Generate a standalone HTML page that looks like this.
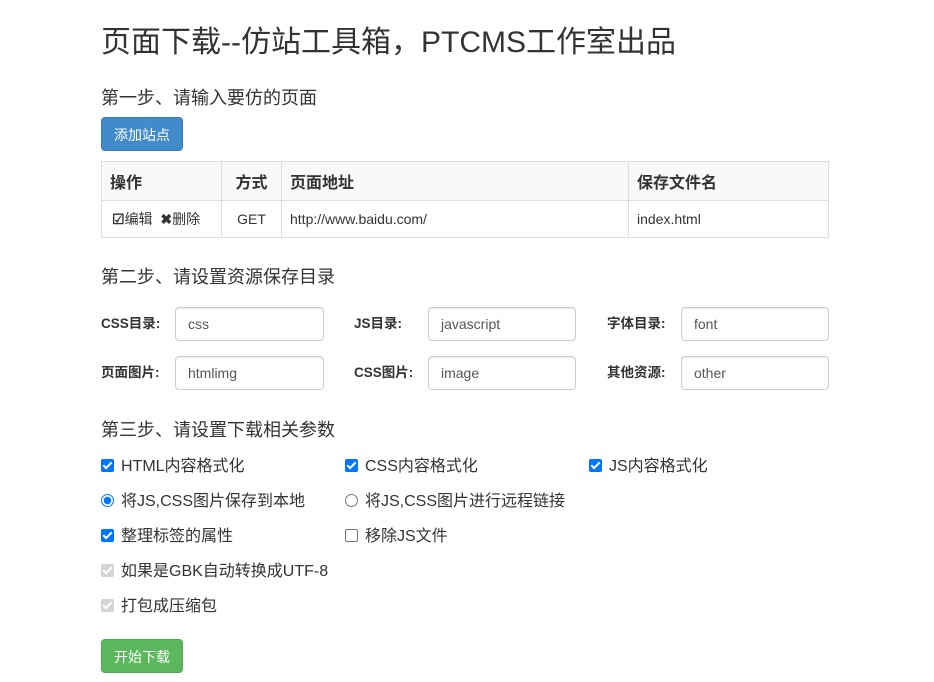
<!DOCTYPE html>
<html><head><meta charset="utf-8"><style>
body{margin:0;background:#fff;font-family:"Liberation Sans","Noto Sans CJK SC",sans-serif;color:#333;font-size:14px;width:934px;height:682px;position:relative;overflow:hidden}
.a{position:absolute;white-space:nowrap}
h1{position:absolute;left:101px;top:23px;margin:0;font-size:30px;font-weight:normal;line-height:40px}
.h{font-size:18px;line-height:24px}
.btn{position:absolute;left:101px;width:82px;height:34px;border-radius:4px;color:#fff;font-size:14px;line-height:34px;text-align:center;box-sizing:border-box}
table{position:absolute;left:101px;top:161px;width:728px;border-collapse:collapse}
td,th{border:1px solid #ddd;padding:0 8px;text-align:left}
th{height:38px;background:#f9f9f9;font-size:16px}
td{height:36px;font-size:14px}
.in{position:absolute;width:149px;height:34px;border:1px solid #ccc;border-radius:4px;box-sizing:border-box;padding-left:12px;line-height:32px;color:#555;font-size:14px;box-shadow:inset 0 1px 1px rgba(0,0,0,.075)}
.lb{position:absolute;font-weight:bold;font-size:13.5px;line-height:34px}
.cb{position:absolute;font-size:16px;line-height:20px}
.bx{display:inline-block;width:13px;height:13px;border-radius:2px;vertical-align:-1px;margin-right:7px;box-sizing:border-box;position:relative}
.on{background:#0075ff}
.on::after{content:"";position:absolute;left:4px;top:1px;width:3px;height:7px;border:solid #fff;border-width:0 2px 2px 0;transform:rotate(45deg)}
.dis{background:#d4d4d4}
.dis::after{content:"";position:absolute;left:4px;top:1px;width:3px;height:7px;border:solid #fff;border-width:0 2px 2px 0;transform:rotate(45deg)}
.off{border:1px solid #767676}
.rd{display:inline-block;width:13px;height:13px;border-radius:50%;box-sizing:border-box;margin-right:7px;vertical-align:-1px}
</style></head><body>
<h1>页面下载--仿站工具箱，PTCMS工作室出品</h1>
<div class="a h" style="left:101px;top:86px">第一步、请输入要仿的页面</div>
<div class="btn" style="top:117px;background:#428bca;border:1px solid #357ebd">添加站点</div>
<table>
<tr><th style="width:103px">操作</th><th style="width:43px;text-align:center">方式</th><th style="width:330px">页面地址</th><th>保存文件名</th></tr>
<tr><td style="padding-left:10px"><b style="font-size:14px">☑</b>编辑 &nbsp;<b>✖</b>删除</td><td style="text-align:center">GET</td><td>http://www.baidu.com/</td><td>index.html</td></tr>
</table>
<div class="a h" style="left:101px;top:265px">第二步、请设置资源保存目录</div>
<div class="lb" style="left:101px;top:307px">CSS目录:</div><div class="in" style="left:175px;top:307px">css</div>
<div class="lb" style="left:354px;top:307px">JS目录:</div><div class="in" style="left:428px;top:307px;width:148px">javascript</div>
<div class="lb" style="left:607px;top:307px">字体目录:</div><div class="in" style="left:681px;top:307px;width:148px">font</div>
<div class="lb" style="left:101px;top:356px">页面图片:</div><div class="in" style="left:175px;top:356px">htmlimg</div>
<div class="lb" style="left:354px;top:356px">CSS图片:</div><div class="in" style="left:428px;top:356px;width:148px">image</div>
<div class="lb" style="left:607px;top:356px">其他资源:</div><div class="in" style="left:681px;top:356px;width:148px">other</div>
<div class="a h" style="left:101px;top:418px">第三步、请设置下载相关参数</div>
<div class="cb" style="left:101px;top:457px"><span class="bx on"></span>HTML内容格式化</div>
<div class="cb" style="left:345px;top:457px"><span class="bx on"></span>CSS内容格式化</div>
<div class="cb" style="left:589px;top:457px"><span class="bx on"></span>JS内容格式化</div>
<div class="cb" style="left:101px;top:492px"><span class="rd" style="border:1px solid #0075ff;background:radial-gradient(circle,#0075ff 0 3.5px,#fff 4px)"></span>将JS,CSS图片保存到本地</div>
<div class="cb" style="left:345px;top:492px"><span class="rd" style="border:1px solid #767676"></span>将JS,CSS图片进行远程链接</div>
<div class="cb" style="left:101px;top:527px"><span class="bx on"></span>整理标签的属性</div>
<div class="cb" style="left:345px;top:527px"><span class="bx off"></span>移除JS文件</div>
<div class="cb" style="left:101px;top:562px"><span class="bx dis"></span>如果是GBK自动转换成UTF-8</div>
<div class="cb" style="left:101px;top:597px"><span class="bx dis"></span>打包成压缩包</div>
<div class="btn" style="top:639px;background:#5cb85c;border:1px solid #4cae4c">开始下载</div>
</body></html>
